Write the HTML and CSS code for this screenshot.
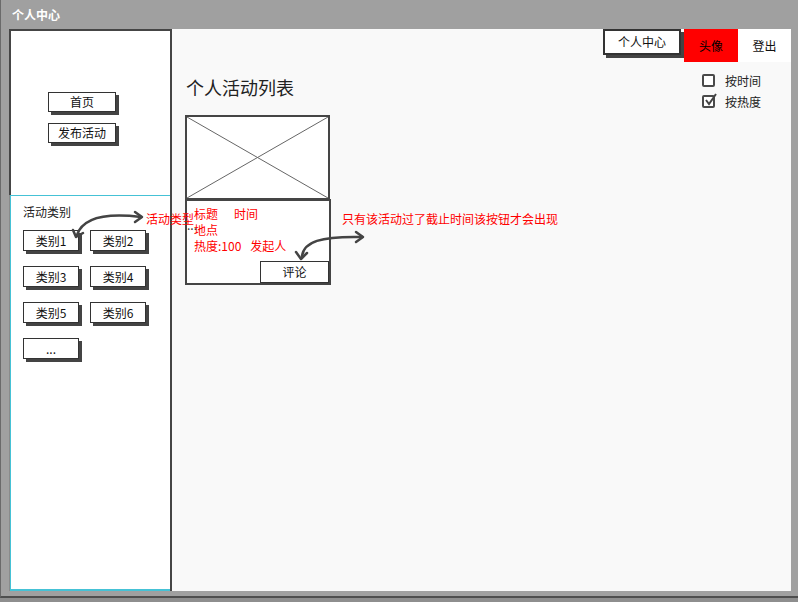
FILE: index.html
```html
<!DOCTYPE html>
<html lang="zh">
<head>
<meta charset="utf-8">
<title>个人中心</title>
<link rel="stylesheet" href="styles.css">
</head>
<body>
<div class="window">
  <div class="titlebar">个人中心</div>
  <div class="content">
    <aside class="sidebar">
      <nav class="nav">
        <div class="btn nav-btn">首页</div>
        <div class="btn nav-btn">发布活动</div>
      </nav>
      <section class="cats">
        <div class="cats-label">活动类别</div>
        <div class="cat-grid">
          <div class="btn cat-btn">类别1</div>
          <div class="btn cat-btn">类别2</div>
          <div class="btn cat-btn">类别3</div>
          <div class="btn cat-btn">类别4</div>
          <div class="btn cat-btn">类别5</div>
          <div class="btn cat-btn">类别6</div>
          <div class="btn cat-btn">...</div>
        </div>
      </section>
    </aside>
    <main class="main">
      <div class="topbar">
        <div class="btn top-btn">个人中心</div>
        <div class="avatar">头像</div>
        <div class="logout">登出</div>
      </div>
      <div class="head-row">
        <h1 class="page-title">个人活动列表</h1>
        <div class="filters">
          <div class="filter"><span class="checkbox"></span><span>按时间</span></div>
          <div class="filter"><span class="checkbox checked"><svg width="16" height="16" viewBox="0 0 16 16"><polyline points="3,7 6,11 13,1" fill="none" stroke="#444" stroke-width="2"/></svg></span><span>按热度</span></div>
        </div>
      </div>
      <div class="card">
        <div class="card-img">
          <svg class="ph" viewBox="0 0 141 81" preserveAspectRatio="none"><line x1="0" y1="0" x2="141" y2="81"/><line x1="141" y1="0" x2="0" y2="81"/></svg>
        </div>
        <div class="card-info">
          <div class="info-row"><span>标题</span><span class="gap">时间</span></div>
          <div class="info-row">地点</div>
          <div class="info-row"><span>热度:100</span><span class="gap2">发起人</span></div>
          <div class="btn comment-btn">评论</div>
        </div>
      </div>
    </main>
  </div>
  <div class="overlay">
    <svg class="arrows" width="798" height="602" viewBox="0 0 798 602">
      <g fill="none" stroke="#444" stroke-width="2.5" stroke-linecap="round" stroke-linejoin="round">
        <path d="M77,235 C82,220 100,212 141,217"/>
        <polyline points="135,212 142,217 135,222"/>
        <polyline points="73,230 76,237 83,233"/>
        <path d="M302,256 C304,242 320,236 362,237"/>
        <polyline points="356,232 363,237 356,242"/>
        <polyline points="296,252 301,259 307,253"/>
      </g>
    </svg>
    <div class="note note-type">活动类型</div>
    <div class="note note-btn">只有该活动过了截止时间该按钮才会出现</div>
    <div class="dots">...</div>
  </div>
</div>
</body>
</html>
```

FILE: styles.css
```css
* { box-sizing: border-box; }
html, body { margin: 0; padding: 0; }
body {
  width: 798px;
  height: 602px;
  background: #8e8e8e;
  font-family: "Noto Sans CJK SC", "Noto Sans", sans-serif;
  font-size: 12px;
  color: #222;
  overflow: hidden;
}
.window {
  position: relative;
  width: 798px;
  height: 598px;
  background: #a0a0a0;
  border-left: 1px solid #6a6a6a;
  border-bottom: 2px solid #4e4e4e;
}
.titlebar {
  height: 29px;
  padding: 7px 0 0 11px;
  color: #fff;
  font-weight: bold;
  font-size: 12px;
  line-height: 16px;
}
.content {
  display: flex;
  margin-left: 8px;
  width: 782px;
  height: 562px;
  background: #f9f9f9;
}
.sidebar {
  width: 163px;
  display: flex;
  flex-direction: column;
  border-right: 2px solid #454545;
}
.nav {
  height: 166px;
  background: #fff;
  border-left: 2px solid #454545;
  border-top: 2px solid #454545;
  padding: 61px 0 0 37px;
  display: flex;
  flex-direction: column;
  gap: 11px;
}
.btn {
  background: #fff;
  border: 1px solid #333;
  box-shadow: 3px 3px 0 #444;
  text-align: center;
  color: #111;
}
.nav-btn {
  width: 68px;
  height: 20px;
  line-height: 18px;
}
.cats {
  flex: 1;
  background: #fff;
  border-left: 1px solid #8a8a8a;
  box-shadow: inset 1px 0 0 #45c2d6, inset 0 1px 0 #45c2d6, inset 0 -2px 0 #45c2d6;
  padding: 9px 0 0 13px;
}
.cats-label {
  line-height: 16px;
  color: #222;
}
.cat-grid {
  margin-top: 10px;
  display: grid;
  grid-template-columns: 56px 56px;
  column-gap: 11px;
  row-gap: 15px;
}
.cat-btn {
  height: 21px;
  line-height: 19px;
}
.main {
  flex: 1;
  display: flex;
  flex-direction: column;
}
.topbar {
  display: flex;
  justify-content: flex-end;
  align-items: flex-start;
  height: 33px;
}
.top-btn {
  width: 78px;
  height: 26px;
  line-height: 22px;
  border-width: 2px;
  margin-right: 3px;
}
.avatar {
  width: 54px;
  height: 33px;
  line-height: 33px;
  background: #ff0000;
  color: #000;
  text-align: center;
}
.logout {
  width: 53px;
  height: 33px;
  line-height: 33px;
  background: #fff;
  color: #111;
  text-align: center;
}
.head-row {
  display: flex;
  justify-content: space-between;
  margin-top: 8px;
  height: 42px;
}
.page-title {
  margin: 5px 0 0 14px;
  font-size: 18px;
  font-weight: normal;
  line-height: 24px;
  color: #222;
}
.filters {
  width: 89px;
  display: flex;
  flex-direction: column;
}
.filter {
  display: flex;
  align-items: center;
  height: 21px;
  gap: 10px;
}
.checkbox {
  position: relative;
  width: 13px;
  height: 13px;
  border: 2px solid #4a4a4a;
  border-radius: 2px;
  background: #fff;
}
.checkbox svg {
  position: absolute;
  left: -1px;
  top: -4px;
}
.card {
  margin: 3px 0 0 13px;
  width: 146px;
}
.card-img {
  width: 145px;
  height: 85px;
  border: 2px solid #454545;
  background: #fff;
}
.ph {
  display: block;
  width: 141px;
  height: 81px;
  stroke: #666;
  stroke-width: 1;
}
.card-info {
  margin-top: -1px;
  height: 86px;
  border: 2px solid #454545;
  background: #fff;
  padding: 5px 0 0 7px;
  display: flex;
  flex-direction: column;
  color: #ff0000;
}
.info-row {
  line-height: 16px;
  white-space: nowrap;
}
.gap { margin-left: 16px; }
.gap2 { margin-left: 9px; }
.comment-btn {
  align-self: flex-end;
  margin-top: auto;
  width: 69px;
  height: 22px;
  line-height: 19px;
  color: #111;
  box-shadow: 2px 2px 0 #444;
}
.overlay {
  position: absolute;
  left: -1px;
  top: 0;
  width: 798px;
  height: 602px;
  pointer-events: none;
}
.arrows {
  position: absolute;
  left: 0;
  top: 0;
}
.note {
  position: absolute;
  color: #ff0000;
  line-height: 14px;
  white-space: nowrap;
}
.note-type { left: 146px; top: 212px; }
.note-btn { left: 342px; top: 212px; }
.dots {
  position: absolute;
  left: 187px;
  top: 218px;
  line-height: 14px;
  color: #333;
}
```
